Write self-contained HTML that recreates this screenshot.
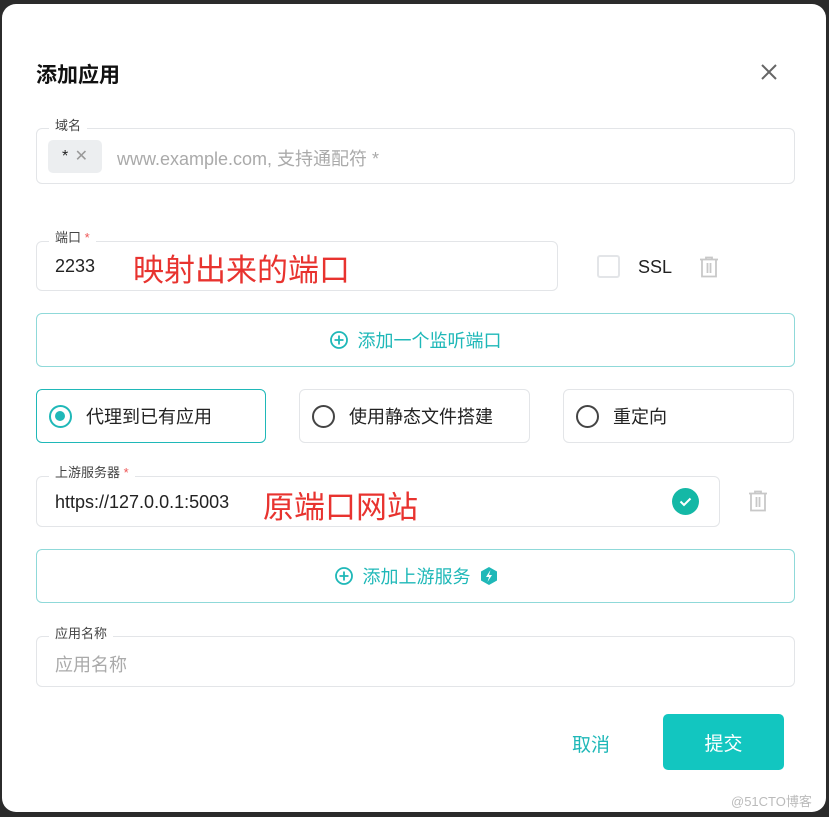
<!DOCTYPE html>
<html><head><meta charset="utf-8"><style>
*{box-sizing:border-box;margin:0;padding:0}
body{width:829px;height:817px;background:#2b2b2b;position:relative;overflow:hidden;font-family:"Liberation Sans","Noto Sans CJK SC",sans-serif;color:#222}
.modal{position:absolute;left:2px;top:4px;width:824px;height:808px;background:#fff;border-radius:14px}
.a{position:absolute}
.box{position:absolute;border:1px solid #e3e5e8;border-radius:6px;background:#fff}
.lbl{position:absolute;background:#fff;padding:0 6px;font-size:13px;color:#444;line-height:14px}
.star{color:#e55}
.tbtn{position:absolute;border:1px solid #8fd9d9;border-radius:6px;color:#1fb8b8;font-size:18px;display:flex;align-items:center;justify-content:center;gap:10px}
.radio{position:absolute;border:1px solid #e3e5e8;border-radius:6px;font-size:18px;display:flex;align-items:center;padding-left:12px;gap:14px}
.rc{width:23px;height:23px;border:2.5px solid #444;border-radius:50%}
.red{color:#e8332f;font-size:31px;position:absolute}
</style></head><body>
<div class="modal"></div>
<div class="a" style="left:36px;top:59px;font-size:21px;font-weight:bold;color:#111">添加应用</div>
<svg class="a" style="left:760px;top:63px" width="18" height="18"><path d="M2 2L16 16M16 2L2 16" stroke="#666" stroke-width="2"/></svg>

<div class="box" style="left:36px;top:128px;width:759px;height:56px"></div>
<div class="lbl" style="left:49px;top:119px">域名</div>
<div class="a" style="left:48px;top:140px;width:54px;height:33px;background:#eceef0;border-radius:5px;font-size:16px;line-height:33px;padding-left:14px">* <span style="color:#999;margin-left:2px">✕</span></div>
<div class="a" style="left:117px;top:145px;font-size:18px;color:#aaa">www.example.com, 支持通配符 *</div>

<div class="box" style="left:36px;top:241px;width:522px;height:50px"></div>
<div class="lbl" style="left:49px;top:231px">端口 <span class="star">*</span></div>
<div class="a" style="left:55px;top:256px;font-size:18px">2233</div>
<div class="red" style="left:133px;top:245px">映射出来的端口</div>
<div class="a" style="left:597px;top:255px;width:23px;height:23px;border:2px solid #e3e5e8;border-radius:3px"></div>
<div class="a" style="left:638px;top:257px;font-size:18px">SSL</div>
<svg class="a" style="left:699px;top:256px" width="20" height="22"><path d="M1 3.5H19M7 3.5V1.5H13V3.5M3 3.5V20.5H17V3.5M8.5 7V17M11.5 7V17" stroke="#c8c8c8" stroke-width="1.8" fill="none"/></svg>

<div class="tbtn" style="left:36px;top:313px;width:759px;height:54px"><svg width="18" height="18"><circle cx="9" cy="9" r="8" stroke="#1fb8b8" stroke-width="1.8" fill="none"/><path d="M4.5 9H13.5M9 4.5V13.5" stroke="#1fb8b8" stroke-width="1.8"/></svg>添加一个监听端口</div>

<div class="radio" style="left:36px;top:389px;width:230px;height:54px;border-color:#1fb8b8"><div class="rc" style="border-color:#1fb8b8;position:relative"><div style="position:absolute;left:4px;top:4px;width:10px;height:10px;border-radius:50%;background:#1fb8b8"></div></div>代理到已有应用</div>
<div class="radio" style="left:299px;top:389px;width:231px;height:54px"><div class="rc"></div>使用静态文件搭建</div>
<div class="radio" style="left:563px;top:389px;width:231px;height:54px"><div class="rc"></div>重定向</div>

<div class="box" style="left:36px;top:476px;width:684px;height:51px"></div>
<div class="lbl" style="left:49px;top:466px">上游服务器 <span class="star">*</span></div>
<div class="a" style="left:55px;top:492px;font-size:18px">https://127.0.0.1:5003</div>
<div class="red" style="left:263px;top:482px">原端口网站</div>
<svg class="a" style="left:672px;top:488px" width="27" height="27"><circle cx="13.5" cy="13.5" r="13.5" fill="#14b8a6"/><path d="M8.5 13.5L12 17L18.5 10.5" stroke="#fff" stroke-width="2" fill="none"/></svg>
<svg class="a" style="left:748px;top:490px" width="20" height="22"><path d="M1 3.5H19M7 3.5V1.5H13V3.5M3 3.5V20.5H17V3.5M8.5 7V17M11.5 7V17" stroke="#c8c8c8" stroke-width="1.8" fill="none"/></svg>

<div class="tbtn" style="left:36px;top:549px;width:759px;height:54px"><svg width="18" height="18"><circle cx="9" cy="9" r="8" stroke="#1fb8b8" stroke-width="1.8" fill="none"/><path d="M4.5 9H13.5M9 4.5V13.5" stroke="#1fb8b8" stroke-width="1.8"/></svg>添加上游服务<svg width="16" height="18"><path d="M8 0L16 4.5V13.5L8 18L0 13.5V4.5Z" fill="#1fb8b8"/><path d="M9.5 3L5 10H8L6.5 15L11 8H8Z" fill="#fff"/></svg></div>

<div class="box" style="left:36px;top:636px;width:759px;height:51px"></div>
<div class="lbl" style="left:49px;top:627px">应用名称</div>
<div class="a" style="left:55px;top:651px;font-size:18px;color:#aaa">应用名称</div>

<div class="a" style="left:572px;top:730px;font-size:19px;color:#1fb8b8">取消</div>
<div class="a" style="left:663px;top:714px;width:121px;height:56px;background:#12c6c0;border-radius:5px;color:#fff;font-size:19px;display:flex;align-items:center;justify-content:center">提交</div>
<div class="a" style="left:731px;top:791px;font-size:13px;color:#bbb">@51CTO博客</div>
</body></html>
